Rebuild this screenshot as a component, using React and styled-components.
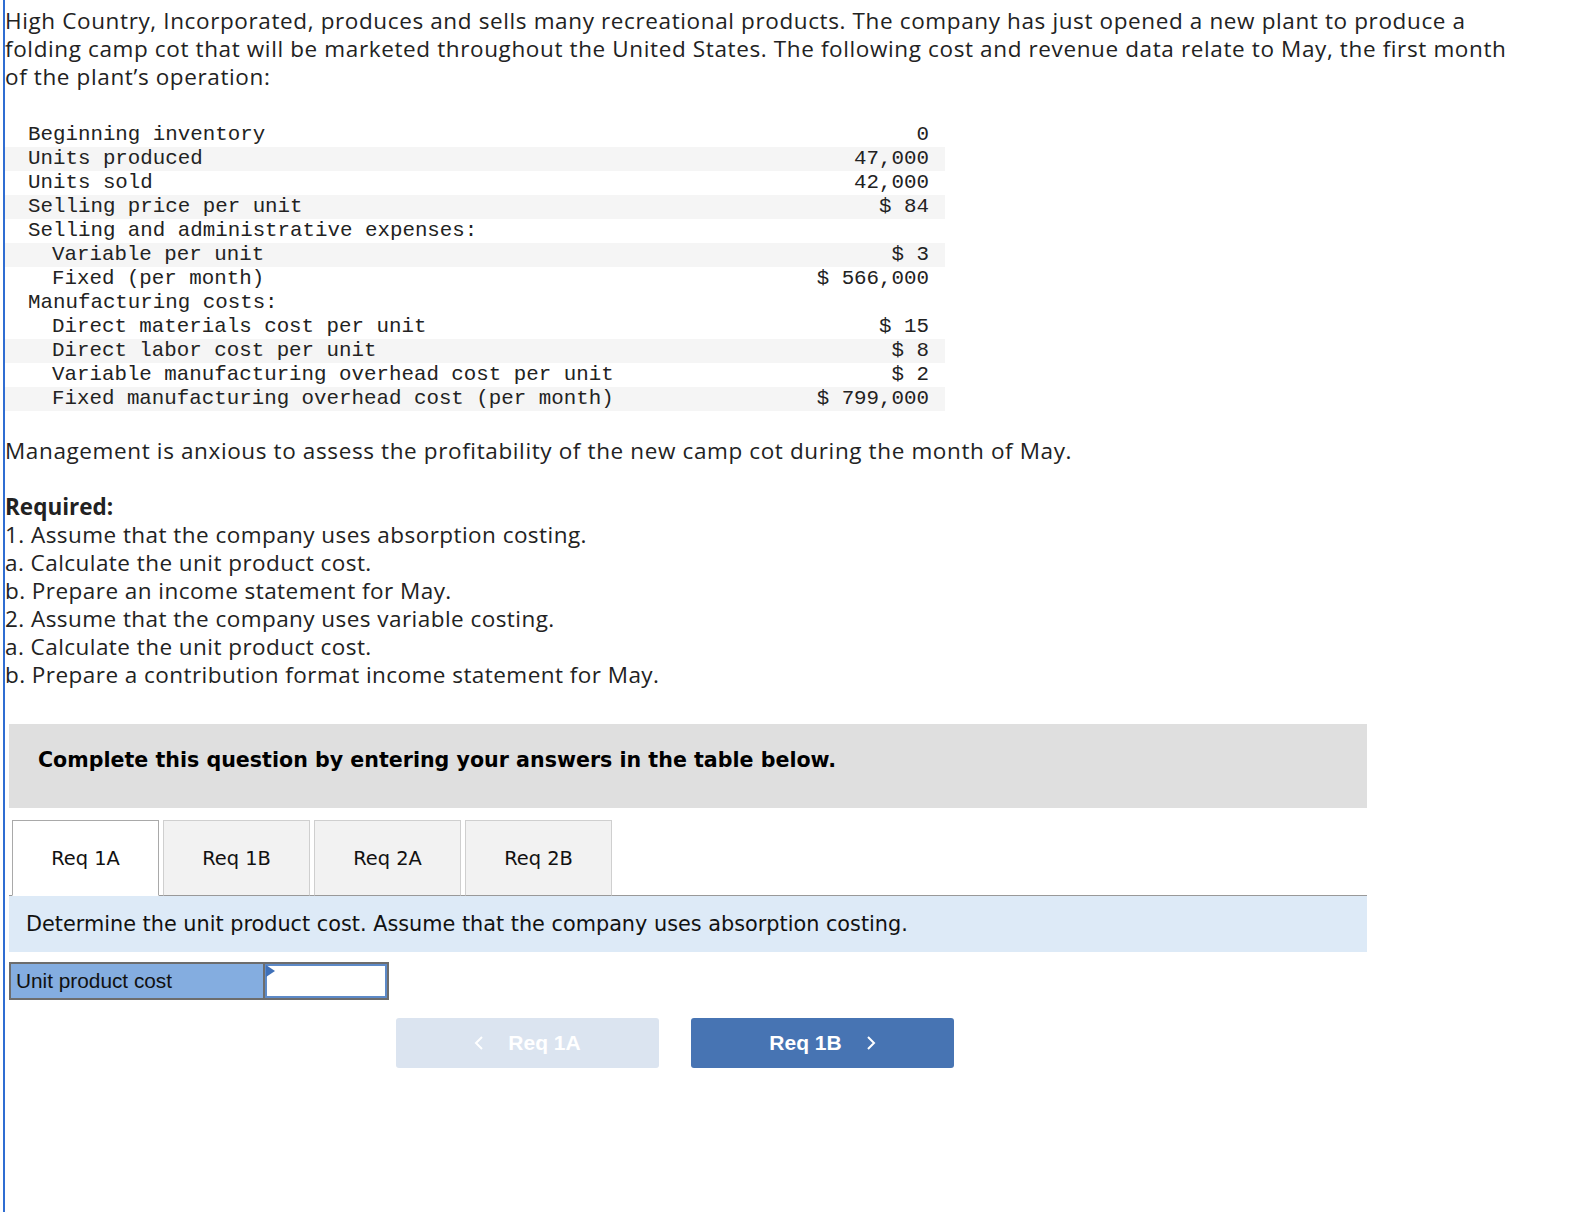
import React from "react";
import styled, { createGlobalStyle } from "styled-components";

const GlobalStyle = createGlobalStyle`
  html, body {
    margin: 0;
    padding: 0;
    background: #fff;
  }
`;

const rows = [
  { label: "Beginning inventory", value: "0", shade: false },
  { label: "Units produced", value: "47,000", shade: true },
  { label: "Units sold", value: "42,000", shade: false },
  { label: "Selling price per unit", value: "$ 84", shade: true },
  { label: "Selling and administrative expenses:", value: "", shade: false },
  { label: "Variable per unit", value: "$ 3", shade: true, indent: true },
  { label: "Fixed (per month)", value: "$ 566,000", shade: false, indent: true },
  { label: "Manufacturing costs:", value: "", shade: false },
  { label: "Direct materials cost per unit", value: "$ 15", shade: false, indent: true },
  { label: "Direct labor cost per unit", value: "$ 8", shade: true, indent: true },
  { label: "Variable manufacturing overhead cost per unit", value: "$ 2", shade: false, indent: true },
  { label: "Fixed manufacturing overhead cost (per month)", value: "$ 799,000", shade: true, indent: true },
];

const tabs = ["Req 1A", "Req 1B", "Req 2A", "Req 2B"];

const App = () => (
  <Page>
    <GlobalStyle />
    <Prose>
      High Country, Incorporated, produces and sells many recreational products. The company has just opened a new plant to produce a
      <br />
      folding camp cot that will be marketed throughout the United States. The following cost and revenue data relate to May, the first month
      <br />
      of the plant’s operation:
    </Prose>

    <DataTable>
      <tbody>
        {rows.map((r) => (
          <DataRow key={r.label} shade={r.shade}>
            <LabelCell indent={r.indent}>{r.label}</LabelCell>
            <ValueCell>{r.value}</ValueCell>
          </DataRow>
        ))}
      </tbody>
    </DataTable>

    <Prose style={{ marginTop: 26 }}>
      Management is anxious to assess the profitability of the new camp cot during the month of May.
    </Prose>

    <Required>
      <strong>Required:</strong>
      <div>1. Assume that the company uses absorption costing.</div>
      <div>a. Calculate the unit product cost.</div>
      <div>b. Prepare an income statement for May.</div>
      <div>2. Assume that the company uses variable costing.</div>
      <div>a. Calculate the unit product cost.</div>
      <div>b. Prepare a contribution format income statement for May.</div>
    </Required>

    <Instruction>Complete this question by entering your answers in the table below.</Instruction>

    <TabStrip>
      {tabs.map((t, i) => (
        <Tab key={t} active={i === 0}>{t}</Tab>
      ))}
    </TabStrip>

    <InfoBar>Determine the unit product cost. Assume that the company uses absorption costing.</InfoBar>

    <AnswerRow>
      <AnswerLabel>Unit product cost</AnswerLabel>
      <AnswerInput>
        <Flag />
      </AnswerInput>
    </AnswerRow>

    <NavRow>
      <NavButton disabled>
        <Chevron viewBox="0 0 10 16"><path d="M8 2 L2 8 L8 14" /></Chevron>
        Req 1A
      </NavButton>
      <NavButton primary>
        Req 1B
        <Chevron viewBox="0 0 10 16"><path d="M2 2 L8 8 L2 14" /></Chevron>
      </NavButton>
    </NavRow>
  </Page>
);

export default App;

const Page = styled.div`
  margin-left: 3px;
  border-left: 2px solid #2f6dd2;
  min-height: 1212px;
  box-sizing: border-box;
  padding-top: 7px;
  color: #222;
`;

const Prose = styled.p`
  margin: 0;
  font-family: "Open Sans", Lato, sans-serif;
  font-size: 22.5px;
  letter-spacing: 0.62px;
  line-height: 28px;
  white-space: nowrap;
`;

const DataTable = styled.table`
  margin-top: 32px;
  width: 940px;
  border-collapse: collapse;
  font-family: "Liberation Mono", "Courier New", monospace;
  font-size: 20.8px;
  color: #222;
`;

const DataRow = styled.tr`
  height: 24px;
  background: ${(p) => (p.shade ? "#f5f5f5" : "transparent")};
`;

const LabelCell = styled.td`
  padding: 0 0 0 ${(p) => (p.indent ? "47px" : "23px")};
  white-space: pre;
  line-height: 24px;
`;

const ValueCell = styled.td`
  padding: 0 16px 0 0;
  text-align: right;
  white-space: pre;
  line-height: 24px;
`;

const Required = styled.div`
  margin-top: 28px;
  font-family: "Open Sans", Lato, sans-serif;
  font-size: 22.5px;
  letter-spacing: 0.45px;
  line-height: 28px;
  strong {
    font-weight: 700;
    letter-spacing: 0;
    display: block;
  }
`;

const Instruction = styled.div`
  margin: 35px 0 0 4px;
  width: 1358px;
  height: 84px;
  box-sizing: border-box;
  background: #dfdfdf;
  display: flex;
  align-items: center;
  padding: 0 0 12px 29px;
  font-family: "DejaVu Sans", Verdana, sans-serif;
  font-weight: 700;
  font-size: 20.6px;
  color: #000;
`;

const TabStrip = styled.div`
  margin: 12px 0 0 4px;
  width: 1358px;
  display: flex;
  gap: 4px;
  padding-left: 3px;
  box-sizing: border-box;
  border-bottom: 1px solid #999;
`;

const Tab = styled.div`
  width: 147px;
  height: 76px;
  margin-bottom: -1px;
  box-sizing: border-box;
  display: flex;
  align-items: center;
  justify-content: center;
  font-family: "DejaVu Sans", Verdana, sans-serif;
  font-size: 19.4px;
  color: #111;
  background: ${(p) => (p.active ? "#fff" : "#f2f2f2")};
  border: 1px solid ${(p) => (p.active ? "#a9a9a9" : "#cfcfcf")};
  border-bottom: 1px solid ${(p) => (p.active ? "#fff" : "#999")};
`;

const InfoBar = styled.div`
  margin-left: 4px;
  width: 1358px;
  height: 56px;
  box-sizing: border-box;
  background: #ddeaf7;
  display: flex;
  align-items: center;
  padding-left: 17px;
  font-family: "DejaVu Sans", Verdana, sans-serif;
  font-size: 20.8px;
  color: #111;
`;

const AnswerRow = styled.div`
  margin: 10px 0 0 4px;
  display: flex;
  width: 380px;
  height: 38px;
  box-sizing: border-box;
  border: 2px solid #6d6d6d;
`;

const AnswerLabel = styled.div`
  width: 254px;
  background: #84ade0;
  border-right: 2px solid #6d6d6d;
  display: flex;
  align-items: center;
  padding-left: 5px;
  box-sizing: border-box;
  font-family: "Liberation Sans", Arial, sans-serif;
  font-size: 20.8px;
  color: #111;
`;

const AnswerInput = styled.div`
  flex: 1;
  position: relative;
  background: #fff;
  border: 2px solid #5d8ac8;
`;

const Flag = styled.span`
  position: absolute;
  left: -1px;
  top: -1px;
  width: 0;
  height: 0;
  border-top: 6px solid transparent;
  border-bottom: 6px solid transparent;
  border-left: 9px solid #3f70b8;
`;

const NavRow = styled.div`
  margin: 18px 0 0 391px;
  display: flex;
  gap: 32px;
`;

const NavButton = styled.div`
  width: 263px;
  height: 50px;
  border-radius: 3px;
  display: flex;
  align-items: center;
  justify-content: center;
  gap: 24px;
  font-family: "Liberation Sans", Arial, sans-serif;
  font-weight: 700;
  font-size: 21px;
  color: #fff;
  background: ${(p) => (p.primary ? "#4774b3" : "#dbe4f0")};
`;

const Chevron = styled.svg`
  width: 10px;
  height: 16px;
  fill: none;
  stroke: #fff;
  stroke-width: 2;
`;
